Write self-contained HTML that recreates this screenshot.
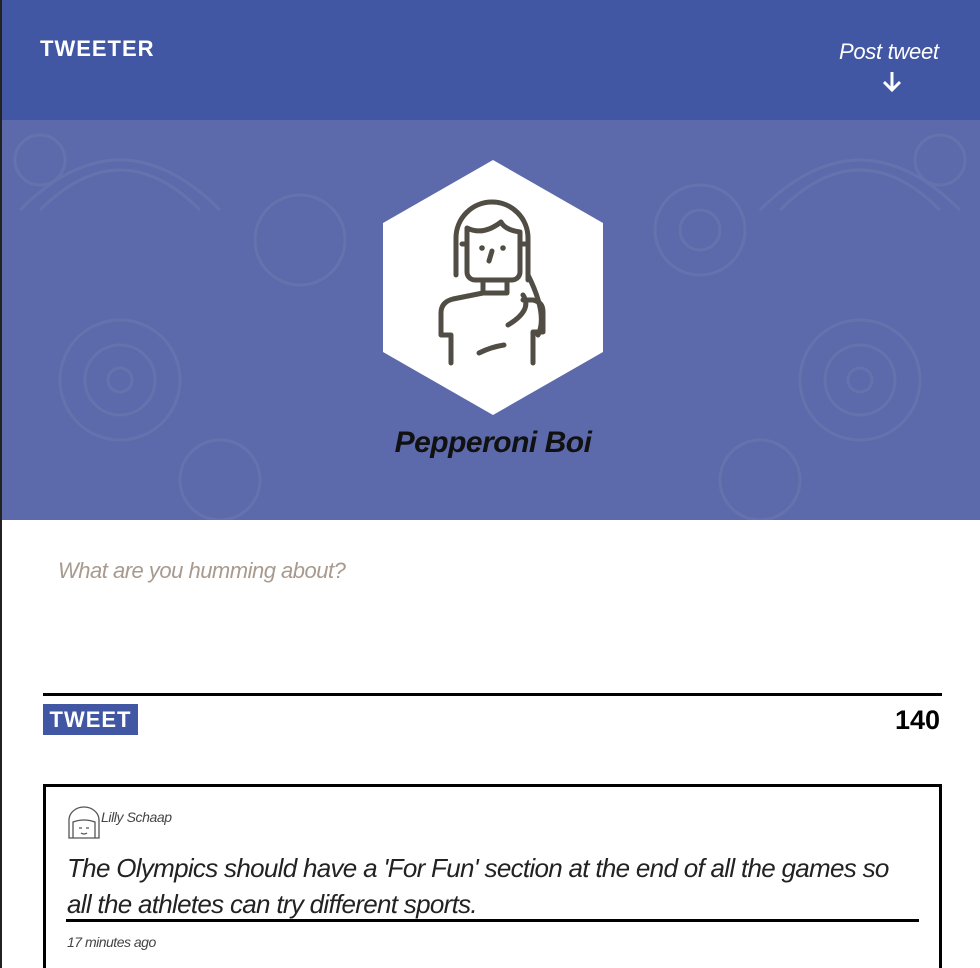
<!DOCTYPE html>
<html><head><style>
html,body{margin:0;width:980px;height:968px;overflow:hidden;background:#fff;font-family:"Liberation Sans",sans-serif;position:relative}
.lb{position:absolute;left:0;top:0;width:2px;height:968px;background:#222;z-index:5}
.hdr{position:absolute;left:0;top:0;width:980px;height:120px;background:#4157a3}
.logo{position:absolute;left:40px;top:36px;color:#fff;font-weight:bold;font-size:22px;letter-spacing:1px}
.post{position:absolute;left:839px;top:39px;color:#fff;font-style:italic;font-size:22px;letter-spacing:-0.3px}
.ban{position:absolute;left:0;top:120px;width:980px;height:400px;background:#5c6aab;overflow:hidden}
.name{position:absolute;left:0;width:986px;top:426px;text-align:center;font-style:italic;font-weight:bold;font-size:30px;color:#111;letter-spacing:-0.5px}
.ph{position:absolute;left:58px;top:558px;font-style:italic;font-size:22px;color:#a89a8e;letter-spacing:-0.5px}
.rule{position:absolute;left:43px;width:899px;top:693px;height:3px;background:#000}
.tw{position:absolute;left:43px;top:704px;width:95px;height:31px;background:#4157a3;color:#fff;font-weight:bold;font-size:22px;text-align:center;line-height:31px;letter-spacing:1px}
.cnt{position:absolute;right:40px;top:705px;font-weight:bold;font-size:27px;color:#000}
.card{position:absolute;left:43px;top:784px;width:893px;height:200px;border:3px solid #000}
.user{position:absolute;left:101px;top:809px;font-style:italic;font-size:14px;color:#444;letter-spacing:-0.4px}
.txt{position:absolute;left:67px;top:850px;width:845px;font-style:italic;font-size:26px;line-height:36px;color:#222;letter-spacing:-0.7px}
.ul{position:absolute;left:66px;top:919px;width:853px;height:3px;background:#000}
.time{position:absolute;left:67px;top:934px;font-style:italic;font-size:14px;color:#444;letter-spacing:-0.5px}
</style></head><body>
<div class="lb"></div>
<div class="hdr"><div class="logo">TWEETER</div><div class="post">Post tweet</div>
<svg style="position:absolute;left:881px;top:70px" width="22" height="24" viewBox="0 0 22 24"><path d="M11 2V20M3 12l8 8 8-8" stroke="#fff" stroke-width="3" fill="none"/></svg></div>
<div class="ban">
<svg width="980" height="400" style="position:absolute;left:0;top:0" fill="none" stroke="#6672ae" stroke-width="3">
<circle cx="120" cy="260" r="60"/><circle cx="120" cy="260" r="35"/><circle cx="120" cy="260" r="12"/>
<circle cx="860" cy="260" r="60"/><circle cx="860" cy="260" r="35"/><circle cx="860" cy="260" r="12"/>
<circle cx="300" cy="120" r="45"/><circle cx="700" cy="110" r="45"/><circle cx="700" cy="110" r="20"/>
<path d="M20 90 Q120 -10 220 90 M40 90 Q120 10 200 90 M760 90 Q860 -10 960 90 M780 90 Q860 10 940 90"/>
<circle cx="220" cy="360" r="40"/><circle cx="760" cy="360" r="40"/><circle cx="40" cy="40" r="25"/><circle cx="940" cy="40" r="25"/>
</svg>
<svg style="position:absolute;left:383px;top:40px" width="220" height="255" viewBox="0 0 220 255"><polygon points="110,0 220,63 220,192 110,255 0,192 0,63" fill="#fff"/>
<g stroke="#514d45" stroke-width="5" fill="none" stroke-linecap="round" stroke-linejoin="round">
<path d="M73 115V78a36 36 0 0 1 72 0v42"/>
<path d="M84 112V68q16 8 34-6 4 8 19 10v40a8 8 0 0 1-8 8H92a8 8 0 0 1-8-8z"/>
<path d="M84 84h-5M137 84h5"/>
<path d="M100 120v13h24v-13"/>
<path d="M100 133l-30 6q-12 3-12 14v22h10v28M145 115q20 40 10 60"/>
<path d="M140 140h10q10 2 10 12v20h-10v31"/>
<path d="M125 165q25-15 15-30"/>
<path d="M96 193q12-6 25-8"/><path d="M109 91l-3 10"/></g>
<circle cx="99" cy="88" r="2.8" fill="#514d45"/><circle cx="120" cy="88" r="2.8" fill="#514d45"/></svg>
</div>
<div class="name">Pepperoni Boi</div>
<div class="ph">What are you humming about?</div>
<div class="rule"></div>
<div class="tw">TWEET</div>
<div class="cnt">140</div>
<div class="card"></div>
<svg style="position:absolute;left:67px;top:806px" width="34" height="36" viewBox="0 0 34 36"><g stroke="#555" stroke-width="1.3" fill="none"><path d="M2 32V14a15 13 0 0 1 30 0v18z"/><path d="M6 32v-16q11-4 22 0v16"/><path d="M12 22h3M19 22h3M14 27q3 2 6 0"/></g></svg>
<div class="user">Lilly Schaap</div>
<div class="txt">The Olympics should have a 'For Fun' section at the end of all the games so all the athletes can try different sports.</div>
<div class="ul"></div>
<div class="time">17 minutes ago</div>
</body></html>
